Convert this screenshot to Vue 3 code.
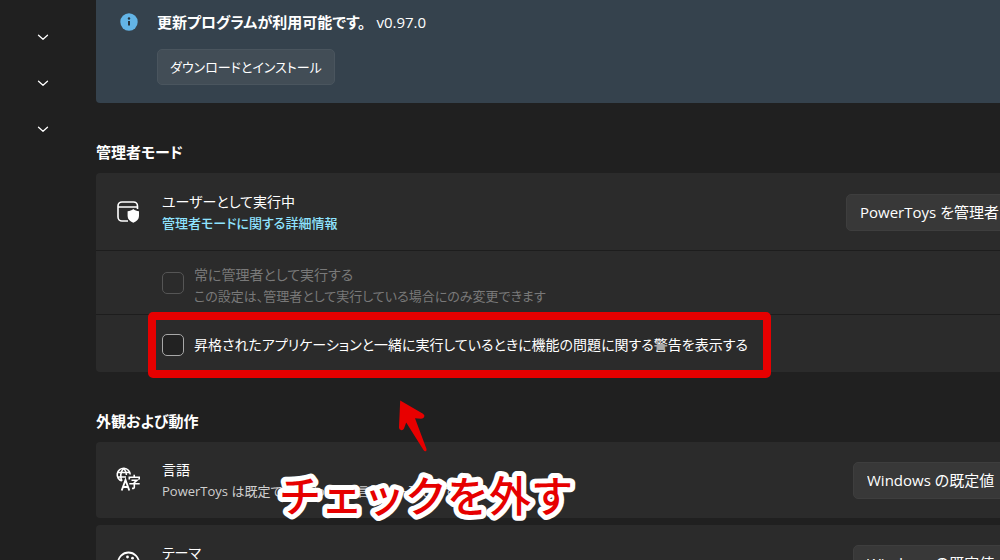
<script setup>
import { ref } from 'vue'

const navGroups = ['システム ツール', 'ウィンドウとレイアウト', '入力と出力']
const alwaysAdmin = ref(false)
const warnElevated = ref(false)
const language = ref('default')
const theme = ref('default')
</script>

<template>
  <div class="window">
    <nav class="sidebar" aria-label="ナビゲーション">
      <button v-for="group in navGroups" :key="group" type="button" class="nav-toggle" :aria-label="group">
        <svg width="12" height="8" viewBox="0 0 12 8" fill="none" stroke="#fff" stroke-width="1.3" stroke-linecap="round" stroke-linejoin="round">
          <path d="M1.5 2.200 6 6.200 10.500 2.200" />
        </svg>
      </button>
    </nav>

    <main class="content">
      <section class="info-bar">
        <svg class="info-icon" width="18" height="18" viewBox="0 0 18 18">
          <circle cx="9" cy="9" r="8.700" fill="#63b4e6" />
          <circle cx="9" cy="5.500" r="1.200" fill="#26333d" />
          <path d="M9 8V12.500" stroke="#26333d" stroke-width="2" />
        </svg>
        <div class="info-body">
          <p class="info-text"><strong>更新プログラムが利用可能です。</strong><span>v0.97.0</span></p>
          <button type="button" class="install">ダウンロードとインストール</button>
        </div>
      </section>

      <h2>管理者モード</h2>
      <section class="card">
        <div class="row lead">
          <svg class="row-icon" width="26" height="26" viewBox="0 0 26 26">
            <path d="M12 22H6a4 4 0 0 1-4-4V7a4 4 0 0 1 4-4h11.500a4 4 0 0 1 4 4V10M2 8h19.500" fill="none" stroke="#fff" stroke-width="1.600" />
            <path d="M17.300 10c1.700 1.500 3.400 2.100 5.700 2.200v4.800c0 3.300-2.200 5.400-5.700 6.800-3.500-1.400-5.700-3.500-5.700-6.800v-4.800c2.300-.1 4-.7 5.700-2.200z" fill="#fff" />
          </svg>
          <div class="texts">
            <span class="title">ユーザーとして実行中</span>
            <a class="link" href="#admin">管理者モードに関する詳細情報</a>
          </div>
          <button type="button" class="control restart">PowerToys を管理者として再起動</button>
        </div>
        <div class="row sub">
          <label class="option disabled">
            <input v-model="alwaysAdmin" type="checkbox" disabled />
            <span class="texts">
              <span class="title">常に管理者として実行する</span>
              <span class="desc">この設定は、管理者として実行している場合にのみ変更できます</span>
            </span>
          </label>
        </div>
        <div class="row sub last">
          <label class="option marked">
            <input v-model="warnElevated" type="checkbox" />
            <span class="title">昇格されたアプリケーションと一緒に実行しているときに機能の問題に関する警告を表示する</span>
          </label>
        </div>
      </section>

      <h2>外観および動作</h2>
      <section class="card annotated">
        <div class="row">
          <svg class="row-icon" width="26" height="26" viewBox="0 0 26 26" fill="none" stroke="#fff" stroke-width="1.600">
            <path d="M6 14A6.500 6.500 0 1 1 14.200 7.500M1.500 5.500h12M1.500 10h8.500M6 14C4 10.500 4.200 4.500 7.700 1.500c1.900 1.700 2.600 3.500 2.700 6.500" />
            <path d="m5.700 23.500 3.800-10.500L13.300 23.500M7.200 20h4.600" stroke-width="1.900" />
            <path d="M18.200 7.700V10M13.300 12.500v-2.300h9.900v2.300M15.500 13.200H21l-2.700 2.500v4.600c0 .9-.6 1.200-2.300 1.100M13.300 16.800h10.400" />
          </svg>
          <div class="texts">
            <label class="title" for="language">言語</label>
            <span class="desc">PowerToys は既定で Windows の言語に一致します</span>
          </div>
          <select id="language" v-model="language" class="control">
            <option value="default">Windows の既定値</option>
          </select>
        </div>
        <svg class="arrow" width="34" height="54" viewBox="0 0 34 54">
          <path d="M3.200 1.500 26 14.800q2 1.400 1.200 3.200T24 19.800l-6-.6L29.500 50q.4 1.800-.8 2.200t-2.200-1.200L9.200 23.500 7 29.500q-1 2-3 1.600T2 28.500z" fill="#e80000" />
        </svg>
        <svg class="callout" width="310" height="66" viewBox="0 0 310 66">
          <text x="7" y="48">チェックを外す</text>
        </svg>
      </section>

      <section class="card">
        <div class="row">
          <svg class="row-icon" width="26" height="26" viewBox="0 0 26 26" fill="none" stroke="#fff" stroke-width="1.800">
            <path d="M2 13A10.500 10.500 0 0 1 23 13c0 4-3 5-6 4.500s-4 1-3.500 3-1 3-3 2.500S2 18 2 13z" />
            <g fill="#fff" stroke="none"><circle cx="7.500" cy="11" r="1.400" /><circle cx="11.500" cy="7" r="1.400" /><circle cx="16.500" cy="8.200" r="1.400" /><circle cx="18.500" cy="13" r="1.400" /></g>
          </svg>
          <div class="texts">
            <label class="title" for="theme">テーマ</label>
            <span class="desc">アプリのテーマを選択する</span>
          </div>
          <select id="theme" v-model="theme" class="control">
            <option value="default">Windows の既定値</option>
          </select>
        </div>
      </section>
    </main>
  </div>
</template>

<style>
body {
  background: #202020;
}
</style>

<style scoped>
.window,
.window button,
.window select {
  font-family: "Open Sans", "Noto Sans CJK JP", sans-serif;
  font-feature-settings: "palt";
}
.window {
  display: flex;
  height: 100vh;
  overflow: hidden;
  background: #202020;
  color: #fff;
  font-size: 14px;
  line-height: 22px;
}
.sidebar {
  flex: none;
  width: 96px;
  box-sizing: border-box;
  padding: 17px 33px 0 23px;
  display: flex;
  flex-direction: column;
  gap: 6px;
}
.nav-toggle {
  height: 40px;
  padding: 0;
  border: 0;
  background: none;
  display: flex;
  align-items: center;
  justify-content: center;
}
/* The settings pane runs on past the right edge of the window. */
.content {
  flex: 1;
  min-width: 0;
  margin-right: -80px;
}
.info-bar {
  display: flex;
  gap: 19px;
  padding: 11px 24px 18px;
  background: #35424d;
  border-radius: 0 0 4px 4px;
}
.info-icon {
  flex: none;
  margin-top: 2px;
}
.info-text {
  margin: 0 0 16px;
  display: flex;
  gap: 11px;
  font-size: 15px;
}
button.install {
  display: block;
  height: 36px;
  padding: 0 12px 2px;
  border: 1px solid #4a555e;
  border-radius: 5px;
  background: #424d56;
  color: #fff;
  font-size: 13px;
}
h2 {
  margin: 38px 0 10px;
  font-size: 15px;
  font-weight: 700;
  line-height: 22px;
}
.card {
  background: #2b2b2b;
  border-radius: 4px;
}
.card + .card {
  margin-top: 7px;
}
.row {
  display: flex;
  align-items: center;
  min-height: 76px;
  box-sizing: border-box;
  padding: 0 20px;
}
.row.lead {
  min-height: 77px;
  padding-top: 1px;
}
.row.sub {
  min-height: 64px;
  padding-left: 66px;
  border-top: 1px solid #1d1d1d;
}
.row.sub.last {
  min-height: 58px;
  padding-top: 2px;
}
.row-icon {
  flex: none;
  margin-right: 20px;
}
.texts {
  display: flex;
  flex-direction: column;
  align-items: flex-start;
}
.title {
  font-size: 14px;
  line-height: 22px;
}
.desc,
.link {
  font-size: 13px;
  line-height: 20px;
}
.desc {
  color: #cfcfcf;
}
.link {
  color: #8fe3ff;
  font-weight: 500;
  text-decoration: none;
}
.control {
  flex: none;
  appearance: none;
  margin-left: auto;
  width: 207px;
  height: 37px;
  padding: 0 13px;
  border: 1px solid #3e3e3e;
  border-radius: 5px;
  background: #383838;
  color: #fff;
  font-size: 15px;
  text-align: left;
  white-space: nowrap;
}
.restart {
  width: 214px;
  padding-bottom: 2px;
  overflow: hidden;
}
.option {
  display: flex;
  align-items: center;
  gap: 10px;
}
.option .texts {
  padding-top: 4px;
}
.option input {
  appearance: none;
  flex: none;
  width: 22px;
  height: 22px;
  margin: 0;
  border: 1px solid #a8a8a8;
  border-radius: 5px;
  background: #222;
}
.disabled {
  color: #797979;
}
.disabled input {
  border-color: #555;
  background: #2b2b2b;
}
.disabled .desc {
  color: #797979;
}
.marked {
  position: relative;
}
.marked::after {
  content: "";
  position: absolute;
  inset: -22px -23px -22px -14px;
  border: 8px solid #e60000;
  border-radius: 5px;
  pointer-events: none;
}
.annotated {
  position: relative;
}
.arrow {
  position: absolute;
  left: 301px;
  top: -43px;
  pointer-events: none;
}
.callout {
  position: absolute;
  left: 176px;
  top: 22px;
  pointer-events: none;
}
.callout text {
  font-family: "Noto Sans CJK JP", sans-serif;
  font-size: 42px;
  font-weight: 500;
  font-feature-settings: normal;
  fill: #e60000;
  stroke: #fff;
  stroke-width: 10px;
  stroke-linejoin: round;
  paint-order: stroke fill;
}
</style>
